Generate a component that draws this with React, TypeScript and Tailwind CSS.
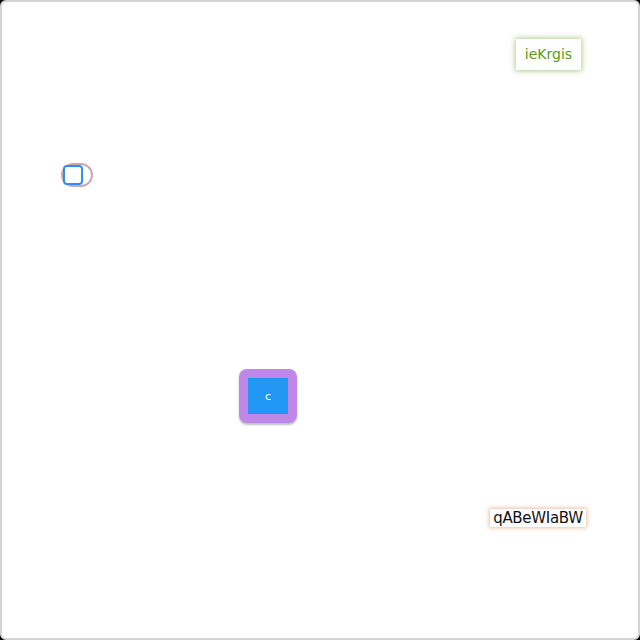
export default function App() {
  return (
    <div className="w-[640px] h-[640px] bg-black">
      <div className="relative w-full h-full bg-white border-2 border-[#d4d4d4] rounded-[6px] overflow-hidden font-['DejaVu_Sans',sans-serif]">
        <button className="absolute left-[514px] top-[37px] w-[65px] h-[31px] bg-white text-[#5a9a14] text-[14px] shadow-[0_0_5px_1px_rgba(110,170,40,0.55)] flex items-center justify-center">
          ieKrgis
        </button>

        <div className="absolute left-[59px] top-[161px] w-[32px] h-[24px] rounded-full border-2 border-[#c9a9b0] flex items-center">
          <div className="w-[20px] h-[20px] rounded-[4px] border-2 border-[#2f8ff0] bg-white" />
        </div>

        <div className="absolute left-[237px] top-[367px] w-[58px] h-[54px] rounded-[8px] bg-[#bf88e8] p-[9px] shadow-[0_2px_2px_rgba(0,0,0,0.25)]">
          <div className="w-full h-full bg-[#2196f3] flex items-center justify-center text-white text-[11px] pt-[2px]">
            c
          </div>
        </div>

        <div className="absolute left-[488px] top-[507px] w-[96px] h-[18px] bg-white text-[#111] text-[15px] leading-[18px] tracking-[-0.3px] flex items-center justify-center shadow-[0_0_4px_1px_rgba(220,150,100,0.6)]">
          qABeWIaBW
        </div>
      </div>
    </div>
  );
}
